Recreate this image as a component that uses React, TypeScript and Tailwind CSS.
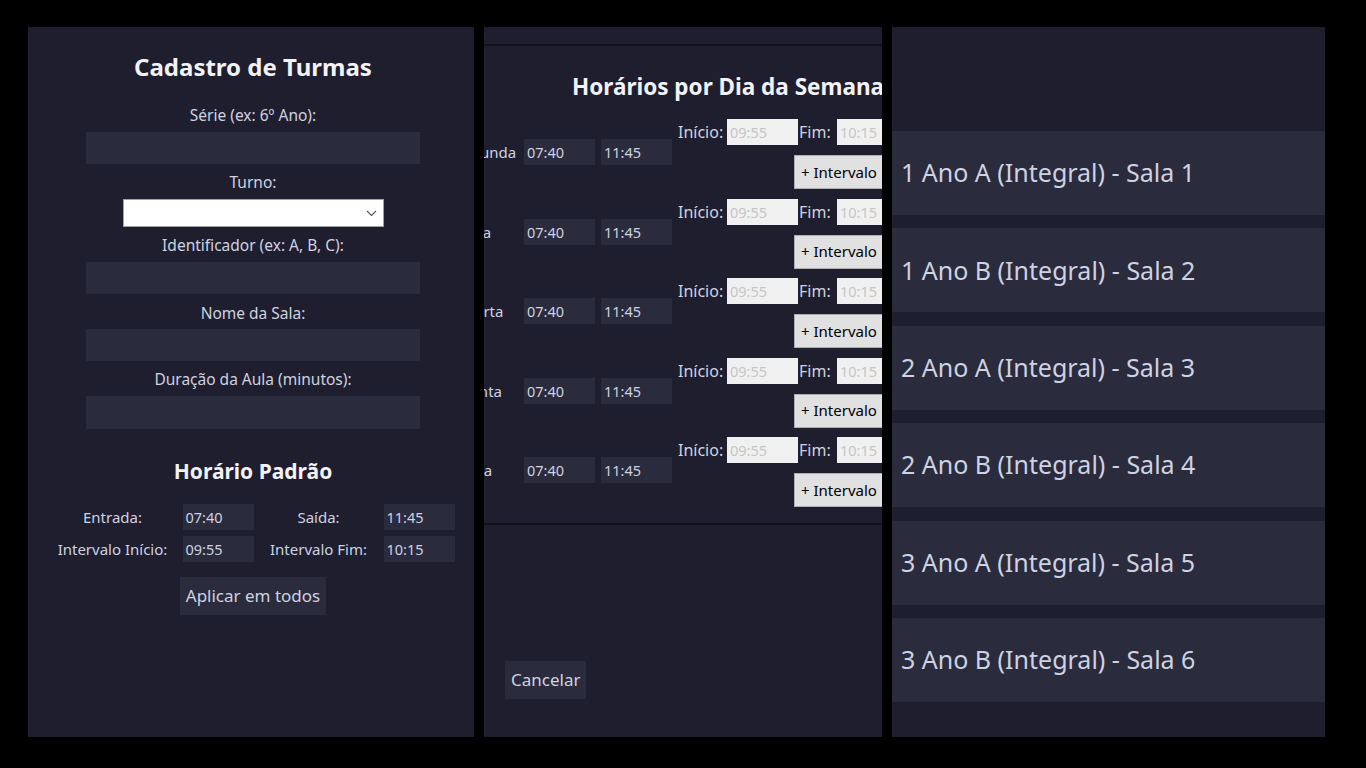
const font = "font-['Noto_Sans','Open_Sans',sans-serif]";

function Label({ text, mt }: { text: string; mt: string }) {
    return <div className={`${mt} h-[20px] leading-[20px] text-[15.5px] text-[#cfd2e0]`}>{text}</div>;
}

function SmallInput({ value }: { value: string }) {
    return (
        <div className="h-[26px] w-[71px] bg-[#2a2b3d] pl-[3px] text-[14.5px] leading-[26px] text-[#cfd2e0]">{value}</div>
    );
}

const days = ["Segunda", "Terça", "Quarta", "Quinta", "Sexta"];
const turmas = [
    "1 Ano A (Integral) - Sala 1",
    "1 Ano B (Integral) - Sala 2",
    "2 Ano A (Integral) - Sala 3",
    "2 Ano B (Integral) - Sala 4",
    "3 Ano A (Integral) - Sala 5",
    "3 Ano B (Integral) - Sala 6",
];

export default function App() {
    return (
        <div className={`${font} h-[768px] w-[1366px] bg-black pt-[27px] flex gap-[10px] pl-[28px]`}>
            {/* Cadastro */}
            <div className="h-[710px] w-[446px] bg-[#1e1e2e] pl-[4px] flex flex-col items-center">
                <h1 className="mt-[24px] h-[32px] leading-[32px] text-[24px] font-bold text-[#f2f2f7]">Cadastro de Turmas</h1>
                <Label text="Série (ex: 6º Ano):" mt="mt-[22px]" />
                <div className="mt-[7px] h-[32px] w-[334px] bg-[#2a2b3d]" />
                <Label text="Turno:" mt="mt-[8px]" />
                <div className="mt-[7px] h-[28px] w-[261px] bg-white border border-[#a0a0a0] flex items-center justify-end pr-[6px]">
                    <svg width="11" height="7" viewBox="0 0 11 7" fill="none" stroke="#555" strokeWidth="1.1">
                        <path d="M1 1l4.5 4.5L10 1" />
                    </svg>
                </div>
                <Label text="Identificador (ex: A, B, C):" mt="mt-[8px]" />
                <div className="mt-[7px] h-[32px] w-[334px] bg-[#2a2b3d]" />
                <Label text="Nome da Sala:" mt="mt-[9px]" />
                <div className="mt-[6px] h-[32px] w-[334px] bg-[#2a2b3d]" />
                <Label text="Duração da Aula (minutos):" mt="mt-[8px]" />
                <div className="mt-[7px] h-[33px] w-[334px] bg-[#2a2b3d]" />
                <h2 className="mt-[28px] h-[28px] leading-[28px] text-[21px] font-bold text-[#f2f2f7]">Horário Padrão</h2>
                <div className="mt-[19px] grid grid-cols-[122px_71px_112px_71px] gap-x-[9px] gap-y-[6px] items-center text-[15px] text-[#cfd2e0]">
                    <div className="text-center">Entrada:</div>
                    <SmallInput value="07:40" />
                    <div className="text-center">Saída:</div>
                    <SmallInput value="11:45" />
                    <div className="text-center">Intervalo Início:</div>
                    <SmallInput value="09:55" />
                    <div className="text-center">Intervalo Fim:</div>
                    <SmallInput value="10:15" />
                </div>
                <button className="mt-[15px] h-[38px] px-[6px] bg-[#2a2b3d] text-[17px] text-[#cfd2e0]">Aplicar em todos</button>
            </div>

            {/* Horários por dia (área rolada horizontalmente) */}
            <div className="h-[710px] w-[398px] bg-[#1e1e2e] flex flex-col">
                <div className="h-[17px]" />
                <div className="h-[481px] border-y-2 border-[#11111a] overflow-hidden">
                    <div className="ml-[-30px] w-[548px] flex flex-col">
                        <h2 className="mt-[26px] h-[30px] leading-[30px] text-center text-[22.5px] font-bold text-[#f2f2f7] whitespace-nowrap">Horários por Dia da Semana</h2>
                        <div className="mt-[17px] flex flex-col gap-[9.5px]">
                            {days.map((d) => (
                                <div key={d} className="h-[70px] flex items-start text-[15px] text-[#cfd2e0]">
                                    <div className="w-[64px] mt-[20px] h-[26px] leading-[26px]">{d}</div>
                                    <div className="ml-[6px] mt-[20px]"><SmallInput value="07:40" /></div>
                                    <div className="ml-[6px] mt-[20px]"><SmallInput value="11:45" /></div>
                                    <div className="ml-[6px] flex flex-col">
                                        <div className="flex items-center h-[26px] text-[16px]">
                                            <span className="w-[49px]">Início:</span>
                                            <div className="h-[26px] w-[71px] bg-[#f0f0f0] pl-[3px] leading-[26px] text-[14.5px] text-[#c6c6c6]">09:55</div>
                                            <span className="ml-[1px] w-[38px]">Fim:</span>
                                            <div className="h-[26px] w-[71px] bg-[#f0f0f0] pl-[3px] leading-[26px] text-[14.5px] text-[#c6c6c6]">10:15</div>
                                        </div>
                                        <button className="mt-[10px] ml-[116px] h-[34px] w-[92px] bg-[#e1e1e1] border border-[#adadad] text-[15px] text-black text-left pl-[6px] whitespace-nowrap">+ Intervalo</button>
                                    </div>
                                </div>
                            ))}
                        </div>
                    </div>
                </div>
                <div className="flex-1">
                    <button className="mt-[136px] ml-[21px] h-[38px] px-[6px] bg-[#2a2b3d] text-[17px] text-[#cfd2e0]">Cancelar</button>
                </div>
            </div>

            {/* Lista de turmas */}
            <div className="h-[710px] w-[433px] bg-[#1e1e2e] pt-[104px] flex flex-col gap-[13.4px]">
                {turmas.map((t) => (
                    <div key={t} className="h-[84px] bg-[#2a2b3d] pl-[9px] flex items-center text-[25px] text-[#cfd2e0]">{t}</div>
                ))}
            </div>
        </div>
    );
}
